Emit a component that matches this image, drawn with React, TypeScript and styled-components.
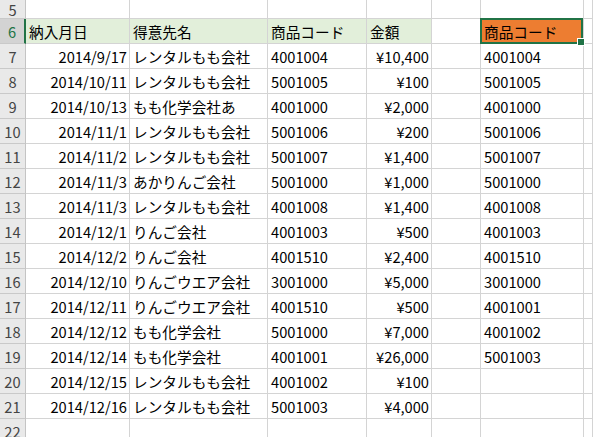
import React from "react";
import styled, { createGlobalStyle } from "styled-components";

const Global = createGlobalStyle`
  html, body { margin: 0; padding: 0; background: #fff; overflow: hidden; }
  body { font-family: "Noto Sans CJK JP", "Noto Sans", sans-serif; }
`;

const Sheet = styled.div`
  display: grid;
  grid-template-columns: 26px 104px 138px 99px 65px 49px 103px 1fr;
  grid-template-rows: 19px repeat(16, 25px) 25px;
  width: 593px;
  height: 437px;
  overflow: hidden;
  font-size: 14.67px;
  color: #000;
`;

const RowHead = styled.div<{ $active?: boolean }>`
  box-sizing: border-box;
  display: flex;
  align-items: center;
  justify-content: center;
  background: ${(p) => (p.$active ? "#d3d3d3" : "#e9e9e9")};
  color: ${(p) => (p.$active ? "#217346" : "#444")};
  border-bottom: 1px solid #c9c9c9;
  border-right: ${(p) => (p.$active ? "2px solid #217346" : "1px solid #c4c4c4")};
  padding-top: 2px;
  line-height: 1;
`;

const Cell = styled.div<{ $align?: "left" | "right"; $fill?: string; $sel?: boolean }>`
  position: relative;
  box-sizing: border-box;
  display: flex;
  align-items: center;
  justify-content: ${(p) => (p.$align === "right" ? "flex-end" : "flex-start")};
  padding: 2px 2px 0 3px;
  white-space: nowrap;
  overflow: visible;
  background: ${(p) => p.$fill || "#fff"};
  border-right: 1px solid #d4d4d4;
  border-bottom: 1px solid #d4d4d4;
  line-height: 1;
  z-index: ${(p) => (p.$sel ? 2 : 1)};
`;

const Selection = styled.div`
  position: absolute;
  top: -1px;
  left: -1px;
  right: 0;
  bottom: -1px;
  border: 2px solid #217346;
  box-sizing: border-box;
  pointer-events: none;
`;

const Handle = styled.div`
  position: absolute;
  right: -4px;
  bottom: -4px;
  width: 6px;
  height: 6px;
  background: #217346;
  border: 1px solid #fff;
`;

const CellText = styled.span`
  position: relative;
  z-index: 1;
`;

type Row = [string, string, string, string, string];

const rows: Row[] = [
  ["2014/9/17", "レンタルもも会社", "4001004", "¥10,400", "4001004"],
  ["2014/10/11", "レンタルもも会社", "5001005", "¥100", "5001005"],
  ["2014/10/13", "もも化学会社あ", "4001000", "¥2,000", "4001000"],
  ["2014/11/1", "レンタルもも会社", "5001006", "¥200", "5001006"],
  ["2014/11/2", "レンタルもも会社", "5001007", "¥1,400", "5001007"],
  ["2014/11/3", "あかりんご会社", "5001000", "¥1,000", "5001000"],
  ["2014/11/3", "レンタルもも会社", "4001008", "¥1,400", "4001008"],
  ["2014/12/1", "りんご会社", "4001003", "¥500", "4001003"],
  ["2014/12/2", "りんご会社", "4001510", "¥2,400", "4001510"],
  ["2014/12/10", "りんごウエア会社", "3001000", "¥5,000", "3001000"],
  ["2014/12/11", "りんごウエア会社", "4001510", "¥500", "4001001"],
  ["2014/12/12", "もも化学会社", "5001000", "¥7,000", "4001002"],
  ["2014/12/14", "もも化学会社", "4001001", "¥26,000", "5001003"],
  ["2014/12/15", "レンタルもも会社", "4001002", "¥100", ""],
  ["2014/12/16", "レンタルもも会社", "5001003", "¥4,000", ""],
];

const HEAD_FILL = "#e2efda";

export default function App() {
  return (
    <>
      <Global />
      <Sheet>
        {/* row 5 */}
        <RowHead>5</RowHead>
        <Cell />
        <Cell />
        <Cell />
        <Cell />
        <Cell />
        <Cell />
        <Cell />

        {/* row 6 */}
        <RowHead $active>6</RowHead>
        <Cell $fill={HEAD_FILL}>納入月日</Cell>
        <Cell $fill={HEAD_FILL}>得意先名</Cell>
        <Cell $fill={HEAD_FILL}>商品コード</Cell>
        <Cell $fill={HEAD_FILL}>金額</Cell>
        <Cell />
        <Cell $fill="#ed7d31" $sel>
          <CellText>商品コード</CellText>
          <Selection>
            <Handle />
          </Selection>
        </Cell>
        <Cell />

        {rows.map((r, i) => (
          <React.Fragment key={i}>
            <RowHead>{i + 7}</RowHead>
            <Cell $align="right">{r[0]}</Cell>
            <Cell>{r[1]}</Cell>
            <Cell>{r[2]}</Cell>
            <Cell $align="right">{r[3]}</Cell>
            <Cell />
            <Cell>{r[4]}</Cell>
            <Cell />
          </React.Fragment>
        ))}

        {/* row 22 */}
        <RowHead>22</RowHead>
        <Cell />
        <Cell />
        <Cell />
        <Cell />
        <Cell />
        <Cell />
        <Cell />
      </Sheet>
    </>
  );
}
